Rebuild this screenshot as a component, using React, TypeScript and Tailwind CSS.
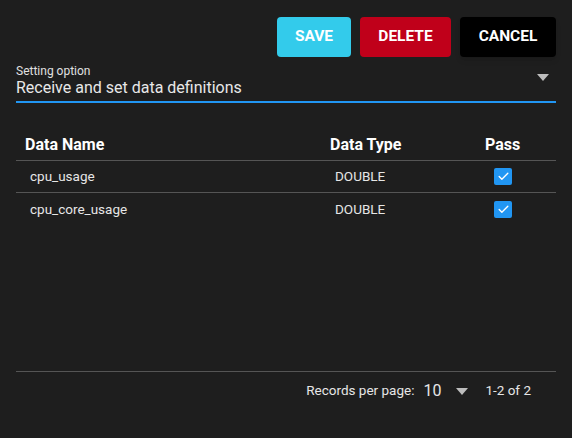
import { Check } from "lucide-react";

const ROWS = [
  { name: "cpu_usage", type: "DOUBLE", pass: true },
  { name: "cpu_core_usage", type: "DOUBLE", pass: true },
];

function Caret({ className = "" }: { className?: string }) {
  return (
    <svg className={className} width="14" height="7" viewBox="0 0 14 7">
      <path d="M1 0h12L7 7z" fill="#bdbdbd" />
    </svg>
  );
}

function CheckBox({ checked }: { checked: boolean }) {
  return (
    <span
      className={`flex h-[17px] w-[18px] items-center justify-center rounded-[2px] ${
        checked ? "bg-[#2196f3]" : "border-2 border-gray-400"
      }`}
    >
      {checked && <Check className="h-[13px] w-[13px] text-white" strokeWidth={2.5} />}
    </span>
  );
}

export default function App() {
  return (
    <div className="flex h-[438px] w-[572px] flex-col bg-[#1e1e1e] px-4 pt-[17px] font-['Roboto',sans-serif] text-white">
      <div className="flex justify-end gap-[9px]">
        <button className="h-10 w-[74px] rounded bg-[#33cbeb] text-[15.5px] font-bold">SAVE</button>
        <button className="h-10 w-[91px] rounded bg-[#c0001a] text-[15.5px] font-bold">DELETE</button>
        <button className="h-10 w-[96px] rounded bg-black text-[15.5px] font-bold shadow-md">CANCEL</button>
      </div>

      <div className="mt-[7px] flex items-end border-b-2 border-[#2196f3] pb-[4px]">
        <div className="flex flex-1 flex-col">
          <span className="text-[12px] leading-[14px] text-[#e0e0e0]">Setting option</span>
          <span className="text-[16px] leading-[19px] text-[#e8e8e8]">Receive and set data definitions</span>
        </div>
        <Caret className="mb-[16px] mr-[6px]" />
      </div>

      <div className="mt-[26px] flex flex-1 flex-col">
        <div className="grid h-8 grid-cols-[305px_155px_1fr] items-center border-b border-[#555] text-[16px] font-bold">
          <span className="pl-[9px]">Data Name</span>
          <span className="pl-[9px]">Data Type</span>
          <span className="pl-[9px]">Pass</span>
        </div>
        {ROWS.map((r, i) => (
          <div
            key={r.name}
            className={`grid h-8 grid-cols-[305px_155px_1fr] items-center text-[13.5px] text-[#e6e6e6] ${
              i < ROWS.length - 1 ? "border-b border-[#555]" : ""
            }`}
          >
            <span className="pl-[14px]">{r.name}</span>
            <span className="pl-[14px]">{r.type}</span>
            <span className="pl-[18px]">
              <CheckBox checked={r.pass} />
            </span>
          </div>
        ))}
      </div>

      <div className="mb-[29px] flex h-[38px] items-center justify-end border-t border-[#555] pr-[25px] text-[13.5px] text-[#e6e6e6]">
        <span className="mr-[9px]">Records per page:</span>
        <span className="mr-[14px] text-[16px] leading-[19px]">10</span>
        <Caret className="mt-[2px] mr-[16px]" />
        <span>1-2 of 2</span>
      </div>
    </div>
  );
}
